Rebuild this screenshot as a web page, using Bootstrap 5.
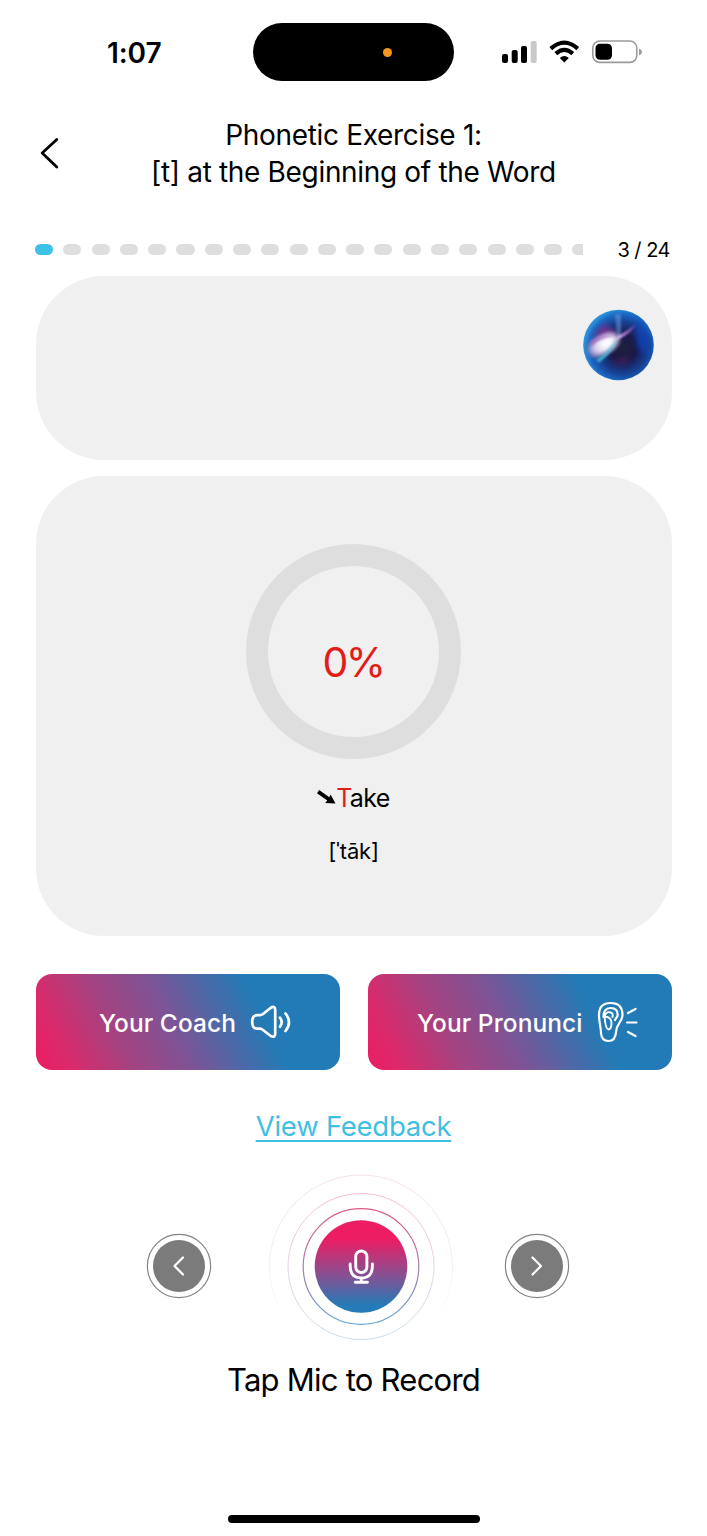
<!DOCTYPE html>
<html lang="en">
<head>
<meta charset="utf-8">
<meta name="viewport" content="width=device-width, initial-scale=1">
<title>Phonetic Exercise 1</title>
<link href="https://cdn.jsdelivr.net/npm/bootstrap@5.3.0/dist/css/bootstrap.min.css" rel="stylesheet">
<style>
  body { background: #fff; color: #000; font-family: Inter, "Liberation Sans", sans-serif; }
  .screen { height: 1536px; width: 707px; overflow: hidden; }
  .status { height: 104px; padding-top: 23px; }
  .clock { width: 253px; height: 59px; padding-left: 107px; font-size: 28px; font-weight: 600; letter-spacing: -.1px; }
  .island { width: 201px; height: 58px; background: #000; padding-left: 130px; }
  .island-dot { width: 9px; height: 9px; background: #f7951d; }
  .signals { padding-left: 47px; }
  .top-nav { padding: 13px 0 0 40px; }
  .back-btn { width: 20px; margin-top: -3px; }
  .heading { width: 587px; font-size: 28px; line-height: 37px; font-weight: 400; letter-spacing: -.33px; margin-bottom: 0; }
  .progress-row { padding: 0 37px 0 35px; height: 20px; margin-top: 48px; }
  .steps { width: 548px; gap: 10.2px; }
  .step { flex: 0 0 18.1px; height: 11px; background: #dedede; border-radius: 6px; }
  .step.on { background: #3dc1e8; }
  .count { font-size: 20px; letter-spacing: -.5px; line-height: 20px; white-space: nowrap; padding-top: 1px; }
  .panel { margin: 0 35.5px; background: #f0f0f0; border-radius: 68px; }
  .panel-one { height: 184px; margin-top: 17px; padding: 33px 18px 0; }
  .panel-two { height: 460px; margin-top: 16px; padding-top: 68px; }
  .dial { width: 215px; height: 215px; border: 22.5px solid #dedede; color: #e11d18; font-size: 41px; letter-spacing: -2.6px; padding-top: 22px; margin-left: -1px; }
  .word { font-size: 25px; line-height: 30px; letter-spacing: -.6px; margin-top: 24px; }
  .hot { color: #e11d18; }
  .ipa { font-size: 22px; line-height: 30px; margin-top: 23px; letter-spacing: -.2px; }
  .actions { margin: 38px 35.5px 0; gap: 28px; }
  .btn-grad { height: 96px; border: 0; border-radius: 16px; color: #fff; font-size: 24.5px; font-weight: 500; background: linear-gradient(64deg, #ec1d63 1%, #d92b6c 11%, #a64280 27%, #805395 44%, #227bb6 72%); white-space: nowrap; }
  .btn-grad:hover { color: #fff; }
  .btn-label { padding-top: 2px; letter-spacing: .08px; }
  .label-coach { width: 151px; margin-left: 63.5px; }
  .label-own { width: 179.5px; margin-left: 49.5px; }
  .feedback { color: #3fbfe2; font-size: 27.5px; line-height: 34px; margin-top: 39px; letter-spacing: -.25px; text-underline-offset: 4px; text-decoration-thickness: 2px; }
  .controls { height: 184px; margin-top: 31px; padding: 0 137.5px 0 146px; }
  .mic { margin-left: 6px; }
  .hint { font-size: 31px; line-height: 40px; letter-spacing: -.75px; margin-top: 2px; }
  .home-bar { width: 252px; height: 8px; background: #000; margin-top: 115px; }
  svg { display: block; flex: none; }
</style>
</head>
<body>
<main class="screen d-flex flex-column">
  <div class="status d-flex align-items-start">
    <div class="clock d-flex align-items-center">1:07</div>
    <div class="island rounded-pill d-flex align-items-center"><span class="island-dot rounded-circle"></span></div>
    <div class="signals">
      <svg width="144" height="58" viewBox="501 23 144 58">
        <rect x="502" y="54" width="6" height="9" rx="2"/>
        <rect x="511.7" y="50" width="6" height="13" rx="2"/>
        <rect x="521" y="46" width="6" height="17" rx="2"/>
        <rect x="530.7" y="41" width="6" height="22" rx="2" fill="#c9c9c9"/>
        <g fill="none" stroke="#000" stroke-width="4.1">
          <path d="M550.8 48.6Q564.3 36.6 577.8 48.6"/>
          <path d="M555.8 53.6Q564.3 46.1 572.8 53.6"/>
        </g>
        <path d="M559.8 58Q564.3 54 568.8 58L564.3 62.6Z"/>
        <rect x="592.8" y="41" width="44" height="21.4" rx="7" fill="none" stroke="#9b9b9b" stroke-width="1.6"/>
        <rect x="595.5" y="43.7" width="16.5" height="16" rx="4.5"/>
        <path d="M639 48.5Q642 49.7 642 52T639 55.5Z" fill="#9b9b9b"/>
      </svg>
    </div>
  </div>

  <header class="top-nav d-flex align-items-center">
    <a href="#" class="back-btn" aria-label="Back">
      <svg width="20" height="32" viewBox="0 0 20 32" fill="none" stroke="#000" stroke-width="2.8" stroke-linecap="round" stroke-linejoin="round"><path d="M16.8 2.5L2.2 16L16.8 30"/></svg>
    </a>
    <h1 class="heading text-center">Phonetic Exercise 1:<br>[t] at the Beginning of the Word</h1>
  </header>

  <div class="progress-row d-flex align-items-center justify-content-between">
    <div class="steps d-flex overflow-hidden">
      <span class="step on"></span><span class="step"></span><span class="step"></span><span class="step"></span><span class="step"></span>
      <span class="step"></span><span class="step"></span><span class="step"></span><span class="step"></span><span class="step"></span>
      <span class="step"></span><span class="step"></span><span class="step"></span><span class="step"></span><span class="step"></span>
      <span class="step"></span><span class="step"></span><span class="step"></span><span class="step"></span><span class="step"></span>
    </div>
    <div class="count">3 / 24</div>
  </div>

  <section class="panel panel-one d-flex justify-content-end align-items-start">
    <svg width="71" height="72" viewBox="0 0 71 72">
      <defs>
        <radialGradient id="orb" cx=".56" cy=".54" r=".54">
          <stop offset="0" stop-color="#1c2238"/><stop offset=".35" stop-color="#1a1a4c"/><stop offset=".68" stop-color="#174296"/><stop offset=".88" stop-color="#1a6ac4"/><stop offset="1" stop-color="#2a90da"/>
        </radialGradient>
        <radialGradient id="glow"><stop offset="0" stop-color="#fff"/><stop offset=".3" stop-color="#f3eff8" stop-opacity=".95"/><stop offset=".65" stop-color="#b79fcb" stop-opacity=".65"/><stop offset="1" stop-color="#6a58a8" stop-opacity="0"/></radialGradient>
        <linearGradient id="ray" x1="0" x2="1" y1="1" y2="0"><stop offset="0" stop-color="#e8dcf8"/><stop offset=".4" stop-color="#c68ae0"/><stop offset="1" stop-color="#8d39be" stop-opacity=".7"/></linearGradient>
        <filter id="soft" x="-50%" y="-50%" width="200%" height="200%"><feGaussianBlur stdDeviation="3"/></filter>
        <filter id="fine" x="-50%" y="-50%" width="200%" height="200%"><feGaussianBlur stdDeviation=".9"/></filter>
        <clipPath id="ball"><circle cx="35.5" cy="36" r="35.3"/></clipPath>
      </defs>
      <g clip-path="url(#ball)">
        <rect width="71" height="72" fill="url(#orb)"/>
        <path d="M10 26L22 15L33 25L18 30Z" fill="#8d2e8a" opacity=".8" filter="url(#soft)"/>
        <path d="M54 10Q68 25 64 48L54 36Z" fill="#1147c8" opacity=".7" filter="url(#soft)"/>
        <path d="M27 54L46 48L42 55Z" fill="#6b2564" opacity=".7" filter="url(#soft)"/>
        <ellipse cx="20" cy="36" rx="21" ry="13" fill="url(#glow)" transform="rotate(-28 20 36)"/>
        <path d="M9 36Q20 25 35 28Q31 35 15 47Q10 45 9 36Z" fill="#d8ccec" opacity=".75" filter="url(#soft)"/>
        <ellipse cx="25" cy="33" rx="10" ry="6" fill="#fff" opacity=".95" filter="url(#soft)" transform="rotate(-35 25 33)"/>
        <path d="M34 28L32 5H38L38 28Z" fill="#719fdf" opacity=".5" filter="url(#fine)"/>
        <path d="M6 33Q18 24 34 27Q20 27 8 37Z" fill="#a45fc0" opacity=".6" filter="url(#fine)"/>
        <path d="M34 27Q44 23 54 14Q48 25 32 32Z" fill="url(#ray)" opacity=".9" filter="url(#fine)"/>
        <path d="M13 51Q25 43 34 30Q30 43 16 54Z" fill="#46c8d8" opacity=".75" filter="url(#fine)"/>
      </g>
    </svg>
  </section>

  <section class="panel panel-two d-flex flex-column align-items-center">
    <div class="dial rounded-circle d-flex align-items-center justify-content-center">0%</div>
    <div class="word d-flex align-items-center">
      <svg width="19" height="16" viewBox="0 0 19 16"><path d="M2.2 0L12.3 7.2L13.6 4.5L18.5 13.5L8.2 13L10.3 10.4L0 3.3Z"/></svg>
      <span><span class="hot">T</span>ake</span>
    </div>
    <div class="ipa">[ˈtāk]</div>
  </section>

  <div class="actions d-flex">
    <button class="btn btn-grad flex-fill w-50 d-flex align-items-center p-0" type="button">
      <span class="btn-label label-coach text-start">Your Coach</span>
      <svg width="42" height="36" viewBox="0 0 42 36" fill="none" stroke="#fff" stroke-width="2.7" stroke-linecap="round" stroke-linejoin="round">
        <path d="M7 11.2H10Q11.5 11.2 13 10L20.5 4Q25.2 1 25.2 6V29.5Q25.2 34.5 20.5 31.8L13 26Q11.5 24.7 10 24.7H7Q2.2 24.7 2.2 18T7 11.2Z"/>
        <path d="M30 13.7Q33.4 18.2 30 22.7M35.5 9.5Q42.5 18.2 35.5 27"/>
      </svg>
    </button>
    <button class="btn btn-grad flex-fill w-50 d-flex align-items-center p-0" type="button">
      <span class="btn-label label-own text-start">Your Pronunci</span>
      <svg width="42" height="42" viewBox="0 0 42 42" fill="none" stroke="#fff" stroke-width="2.2" stroke-linecap="round" stroke-linejoin="round">
        <path d="M2 14Q2 2 13.500 2Q25.500 2 25.500 14C25 22 19.500 22 19 31Q18.500 40 11.500 40Q4.500 40 4 32C4 26 2 22 2 14Z"/>
        <path d="M6.500 16Q6.500 7 13.500 7Q21.500 7 20.500 15L18 19"/>
        <path d="M7.500 15.500Q9 10.800 12.500 11.200Q16.500 11.500 15.500 16M7.500 15.500Q14.500 16 14.500 22Q14.500 28 11.500 28.500Q8.500 28 7.500 15.500Z" stroke-width="1.9"/>
        <path d="M31 12L38.500 8M30 21.500H39.500M31 31L38.500 35"/>
      </svg>
    </button>
  </div>

  <a href="#" class="feedback align-self-center">View Feedback</a>

  <div class="controls d-flex align-items-center justify-content-between">
    <svg width="66" height="66" viewBox="0 0 66 66" fill="none">
      <circle cx="33" cy="33" r="31.6" stroke="#858585" stroke-width="1.2"/><circle cx="33" cy="33" r="26" fill="#7b7b7b"/>
      <path d="M37 24.5L28.5 33L37 41.5" stroke="#fff" stroke-width="2.2" stroke-linecap="round" stroke-linejoin="round"/>
    </svg>
    <svg class="mic" width="186" height="184" viewBox="0 0 186 184" fill="none">
      <defs>
        <linearGradient id="pb" x1="0" y1="0" x2="0" y2="1"><stop offset=".2" stop-color="#ec1d63"/><stop offset=".62" stop-color="#805395"/><stop offset=".92" stop-color="#247bb7"/></linearGradient>
        <linearGradient id="r1" x1="0" y1="0" x2="0" y2="1"><stop offset="0" stop-color="#df5685"/><stop offset=".5" stop-color="#a97cae"/><stop offset="1" stop-color="#63a3cd"/></linearGradient>
        <linearGradient id="r2" x1="0" y1="0" x2="0" y2="1"><stop offset="0" stop-color="#f7bed0"/><stop offset=".5" stop-color="#e2d3e5"/><stop offset="1" stop-color="#c7deec"/></linearGradient>
        <linearGradient id="r3" x1="0" y1="0" x2="0" y2="1"><stop offset="0" stop-color="#f8e1e7"/><stop offset=".5" stop-color="#f4eef5"/><stop offset=".82" stop-color="#fff"/></linearGradient>
      </defs>
      <circle cx="93" cy="92.5" r="91.5" stroke="url(#r3)"/>
      <circle cx="93" cy="92.5" r="73" stroke="url(#r2)"/>
      <circle cx="93" cy="92.5" r="57.8" stroke="url(#r1)" stroke-width="1.2"/>
      <circle cx="93" cy="92.5" r="46.3" fill="url(#pb)"/>
      <g stroke="#fff" stroke-width="2.9" stroke-linecap="round">
        <rect x="87.7" y="77" width="11.2" height="21.5" rx="5.6"/>
        <path d="M82.2 90V92Q82.2 104 93.3 104T104.4 92V90M93.3 104V108M87.2 108.2H99.4"/>
      </g>
    </svg>
    <svg width="66" height="66" viewBox="0 0 66 66" fill="none">
      <circle cx="33" cy="33" r="31.6" stroke="#858585" stroke-width="1.2"/><circle cx="33" cy="33" r="26" fill="#7b7b7b"/>
      <path d="M28.5 24.5L37 33L28.5 41.5" stroke="#fff" stroke-width="2.2" stroke-linecap="round" stroke-linejoin="round"/>
    </svg>
  </div>

  <div class="hint text-center">Tap Mic to Record</div>
  <div class="home-bar rounded-pill align-self-center"></div>
</main>
<script src="https://cdn.jsdelivr.net/npm/bootstrap@5.3.0/dist/js/bootstrap.bundle.min.js"></script>
</body>
</html>
